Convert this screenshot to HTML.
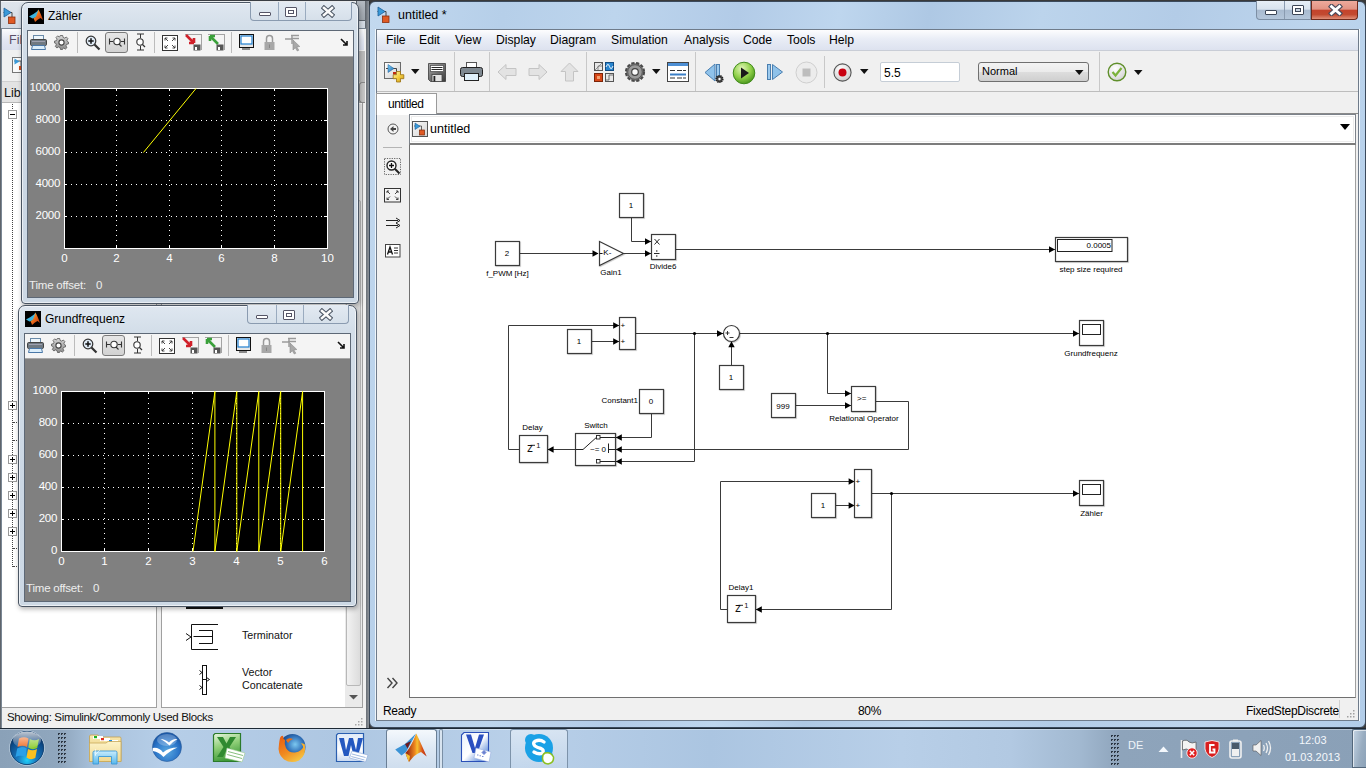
<!DOCTYPE html>
<html><head><meta charset="utf-8">
<style>
*{box-sizing:border-box}
body{margin:0;width:1366px;height:768px;overflow:hidden;position:relative;background:#3a3a3a;font-family:"Liberation Sans",sans-serif;font-size:12px;color:#000}
.a{position:absolute}
.t{position:absolute;white-space:nowrap;line-height:1}
</style></head><body>

<!-- ============ LIBRARY BROWSER (background) ============ -->
<div class="a" style="left:0;top:0;width:370px;height:2px;background:#3c4046"></div>
<div class="a" style="left:0;top:1px;width:370px;height:727px;background:linear-gradient(180deg,#dfe5ec 0,#d2dae3 28px,#cfd7e0 100%);border-top:1px solid #f4f6f8"></div>
<div class="a" style="left:0;top:1px;width:1px;height:727px;background:#5f656c"></div>
<div class="a" style="left:365px;top:1px;width:4px;height:727px;background:linear-gradient(90deg,#5c6269,#8d939a)"></div>
<div class="a" style="left:369px;top:1px;width:1px;height:727px;background:#2e3236"></div>
<svg class="a" style="left:1px;top:6px" width="20" height="20" viewBox="0 0 20 20">
 <path d="M2.5 6.5 H11 V13" fill="none" stroke="#444" stroke-width="1"/>
 <path d="M3 2 L3 11 L10 6.5 Z" fill="#3a9ad9" stroke="#1d5f9a" stroke-width="0.8"/>
 <rect x="7.5" y="11" width="6.5" height="6.5" fill="#e05a24" stroke="#8a2e0e" stroke-width="0.8"/>
</svg>
<div class="a" style="left:1px;top:28px;width:365px;height:700px;background:#f0f0f0;border:1px solid #7a8794;border-right:none;border-bottom:none"></div>
<div class="a" style="left:2px;top:29px;width:362px;height:21px;background:linear-gradient(#fbfcfd,#e4e8f3 50%,#dbe0ee)"></div>
<div class="t" style="left:9px;top:34px;font-size:12.5px;color:#5c5068">File</div>
<div class="a" style="left:2px;top:50px;width:362px;height:32px;background:#f0f0f0;border-bottom:1px solid #d0d0d0"></div>
<svg class="a" style="left:12px;top:57px" width="18" height="17" viewBox="0 0 18 17"><rect x="0.5" y="0.5" width="15" height="15" fill="#fbfbfb" stroke="#777"/><path d="M2 4 H9 V10" stroke="#444" fill="none" stroke-width="0.9"/><path d="M2.5 1.5 V7.5 L7.5 4.5Z" fill="#3a9ad9"/><rect x="7" y="9" width="4" height="4" fill="#d04a1a"/></svg>
<div class="a" style="left:2px;top:82px;width:362px;height:21px;background:#e3e3e3;border-bottom:1px solid #b8b8b8"></div>
<div class="t" style="left:4px;top:87px;font-size:12.5px;color:#111">Library</div>
<div class="a" style="left:356px;top:1px;width:9px;height:20px;background:linear-gradient(#b4bac1,#9ea5ad);border:1px solid #5d646c;border-right:none;border-top:none;border-radius:0 0 0 4px"></div>
<div class="a" style="left:359px;top:51px;width:6px;height:31px;background:#bcbcbc"></div>
<div class="a" style="left:359px;top:82px;width:6px;height:21px;background:#c6c6c6;border:1px solid #8a8a8a;border-right:none;border-radius:3px 0 0 3px"></div>
<!-- tree panel -->
<div class="a" style="left:2px;top:103px;width:155px;height:605px;background:#fff;border-right:1px solid #a0a0a0;border-bottom:1px solid #a0a0a0"></div>
<div class="a" style="left:12px;top:104px;width:1px;height:463px;border-left:1px dotted #444"></div>
<div class="a" style="left:8px;top:110px;width:9px;height:9px;border:1px solid #999;background:#fff"><div class="a" style="left:1px;top:3px;width:5px;height:1px;background:#000"></div></div>
<div class="a" style="left:8px;top:401px;width:9px;height:9px;border:1px solid #999;background:#fff"><div class="a" style="left:1px;top:3px;width:5px;height:1px;background:#000"></div><div class="a" style="left:3px;top:1px;width:1px;height:5px;background:#000"></div></div>
<div class="a" style="left:8px;top:455px;width:9px;height:9px;border:1px solid #999;background:#fff"><div class="a" style="left:1px;top:3px;width:5px;height:1px;background:#000"></div><div class="a" style="left:3px;top:1px;width:1px;height:5px;background:#000"></div></div>
<div class="a" style="left:8px;top:473px;width:9px;height:9px;border:1px solid #999;background:#fff"><div class="a" style="left:1px;top:3px;width:5px;height:1px;background:#000"></div><div class="a" style="left:3px;top:1px;width:1px;height:5px;background:#000"></div></div>
<div class="a" style="left:8px;top:491px;width:9px;height:9px;border:1px solid #999;background:#fff"><div class="a" style="left:1px;top:3px;width:5px;height:1px;background:#000"></div><div class="a" style="left:3px;top:1px;width:1px;height:5px;background:#000"></div></div>
<div class="a" style="left:8px;top:509px;width:9px;height:9px;border:1px solid #999;background:#fff"><div class="a" style="left:1px;top:3px;width:5px;height:1px;background:#000"></div><div class="a" style="left:3px;top:1px;width:1px;height:5px;background:#000"></div></div>
<div class="a" style="left:8px;top:527px;width:9px;height:9px;border:1px solid #999;background:#fff"><div class="a" style="left:1px;top:3px;width:5px;height:1px;background:#000"></div><div class="a" style="left:3px;top:1px;width:1px;height:5px;background:#000"></div></div>
<div class="a" style="left:13px;top:422px;width:6px;height:1px;border-top:1px dotted #444"></div>
<div class="a" style="left:13px;top:440px;width:6px;height:1px;border-top:1px dotted #444"></div>
<div class="a" style="left:13px;top:548px;width:6px;height:1px;border-top:1px dotted #444"></div>
<div class="a" style="left:13px;top:566px;width:6px;height:1px;border-top:1px dotted #444"></div>
<!-- right panel -->
<div class="a" style="left:161px;top:103px;width:202px;height:605px;background:#fff;border-left:1px solid #a0a0a0;border-right:1px solid #a0a0a0;border-bottom:1px solid #a0a0a0"></div>
<div class="a" style="left:345px;top:104px;width:17px;height:603px;background:#eaeaea"></div>
<div class="a" style="left:346px;top:200px;width:15px;height:486px;background:linear-gradient(90deg,#f2f2f2,#dcdcdc);border:1px solid #b8b8b8;border-radius:2px"></div>
<svg class="a" style="left:349px;top:695px" width="9" height="5"><path d="M0 0 H9 L4.5 4.5Z" fill="#555"/></svg>
<div class="a" style="left:186px;top:607px;width:37px;height:2px;background:#111"></div>
<svg class="a" style="left:180px;top:615px" width="50" height="85" viewBox="180 615 50 85" fill="none" stroke="#111" stroke-width="1">
 <path d="M186 633.5 L191 637 L186 640.5"/>
 <path d="M218 624.5 H191.5 V649.5 H218"/>
 <path d="M199 630.5 H212.5 V643.5 H199 M193.5 636.5 H212.5"/>
 <rect x="202.5" y="665.5" width="4" height="29"/>
 <path d="M202.5 679.5 H206.5"/>
 <path d="M199.5 670.5 L202 672.5 L199.5 674.5 M199.5 685.5 L202 687.5 L199.5 689.5 M206.5 677.5 L209.5 679.5 L206.5 681.5"/>
</svg>
<div class="t" style="left:242px;top:630px;font-size:10.7px;color:#111">Terminator</div>

<div class="t" style="left:242px;top:667px;font-size:10.7px;color:#111">Vector</div>
<div class="t" style="left:242px;top:680px;font-size:10.7px;color:#111">Concatenate</div>
<!-- status -->
<svg class="a" style="left:354px;top:717px" width="10" height="10"><rect x="7" y="1" width="1.5" height="1.5" fill="#a8a8a8"/><rect x="4" y="4" width="1.5" height="1.5" fill="#a8a8a8"/><rect x="7" y="4" width="1.5" height="1.5" fill="#a8a8a8"/><rect x="1" y="7" width="1.5" height="1.5" fill="#a8a8a8"/><rect x="4" y="7" width="1.5" height="1.5" fill="#a8a8a8"/><rect x="7" y="7" width="1.5" height="1.5" fill="#a8a8a8"/></svg>
<div class="t" style="left:7px;top:712px;font-size:11.5px;letter-spacing:-0.35px;color:#111">Showing: Simulink/Commonly Used Blocks</div>


<!-- ============ MAIN SIMULINK WINDOW ============ -->
<div id="main" class="a" style="left:369px;top:1px;width:997px;height:727px;border:1px solid #3b4a5c;border-radius:6px 6px 6px 6px;background:linear-gradient(100deg,#c3d9ef 0%,#b6cfe9 12%,#bdd5ed 22%,#b2cbe7 33%,#bed6ee 42%,#aec8e4 50%,#bcd4ec 60%,#b3cce7 72%,#bdd5ed 85%,#b2cde9 100%)">
</div>

<div class="a" style="left:376px;top:29px;width:983px;height:692px;background:#f0f0f0;border:1px solid #6f7b8a"></div>
<div class="a" style="left:1359px;top:29px;width:1px;height:692px;background:#f4f9fd"></div>
<div class="a" style="left:375px;top:29px;width:1px;height:692px;background:#eef5fb"></div>
<!-- title icon -->
<svg class="a" style="left:375px;top:5px" width="20" height="20" viewBox="0 0 20 20">
 <path d="M2.5 6.5 H11 V13" fill="none" stroke="#444" stroke-width="1"/>
 <path d="M3 2 L3 11 L10 6.5 Z" fill="#3a9ad9" stroke="#1d5f9a" stroke-width="0.8"/>
 <rect x="7.5" y="11" width="6.5" height="6.5" fill="#e05a24" stroke="#8a2e0e" stroke-width="0.8"/>
</svg>
<div class="t" style="left:398px;top:9px;font-size:12.5px;color:#000">untitled *</div>
<!-- caption buttons -->
<div class="a" style="left:1256px;top:1px;width:55px;height:19px;border:1px solid #7d8fa4;border-top:none;border-radius:0 0 0 4px;background:linear-gradient(#e6eef6,#d8e3ee 45%,#a9bbd0 52%,#b4c6da 100%)"></div>
<div class="a" style="left:1284px;top:1px;width:1px;height:18px;background:#8a9bb0"></div>
<div class="a" style="left:1265px;top:10px;width:12px;height:5px;border:1px solid #3c4656;background:#fff;border-radius:1px"></div>
<div class="a" style="left:1292px;top:5px;width:12px;height:10px;border:1px solid #3c4656;background:#fff;border-radius:1px"><div class="a" style="left:2px;top:2px;width:6px;height:4px;border:1px solid #3c4656;background:#c8d4e0"></div></div>
<div class="a" style="left:1311px;top:1px;width:47px;height:19px;border:1px solid #6e2a1c;border-top:none;border-radius:0 0 4px 0;background:linear-gradient(#eeaa9c,#e29484 45%,#c4432c 52%,#c24a30 75%,#e0907a)"></div>
<svg class="a" style="left:1328px;top:4px" width="15" height="12" viewBox="0 0 15 12"><path d="M3.5 2.5 L11.5 9.5 M11.5 2.5 L3.5 9.5" stroke="#4a4a5a" stroke-width="5" stroke-linecap="square"/><path d="M3.5 2.5 L11.5 9.5 M11.5 2.5 L3.5 9.5" stroke="#fff" stroke-width="2.8" stroke-linecap="square"/></svg>
<!-- menu bar -->
<div class="a" style="left:377px;top:30px;width:981px;height:21px;background:linear-gradient(#fdfdfe,#e9edf6 45%,#dde2ef);border-bottom:1px solid #c9cdd6"></div>
<div class="t" style="left:386px;top:34px;font-size:12.2px">File</div>
<div class="t" style="left:419px;top:34px;font-size:12.2px">Edit</div>
<div class="t" style="left:455px;top:34px;font-size:12.2px">View</div>
<div class="t" style="left:496px;top:34px;font-size:12.2px">Display</div>
<div class="t" style="left:550px;top:34px;font-size:12.2px">Diagram</div>
<div class="t" style="left:611px;top:34px;font-size:12.2px">Simulation</div>
<div class="t" style="left:684px;top:34px;font-size:12.2px">Analysis</div>
<div class="t" style="left:743px;top:34px;font-size:12.2px">Code</div>
<div class="t" style="left:787px;top:34px;font-size:12.2px">Tools</div>
<div class="t" style="left:829px;top:34px;font-size:12.2px">Help</div>
<!-- toolbar -->
<div class="a" style="left:377px;top:51px;width:981px;height:41px;background:#f0f0f0;border-bottom:1px solid #bdbdbd"></div>
<div class="a" style="left:454px;top:52px;width:1px;height:39px;background:#c8c8c8"></div>
<div class="a" style="left:489px;top:52px;width:1px;height:39px;background:#c8c8c8"></div>
<div class="a" style="left:586px;top:52px;width:1px;height:39px;background:#c8c8c8"></div>
<div class="a" style="left:695px;top:52px;width:1px;height:39px;background:#c8c8c8"></div>
<div class="a" style="left:824px;top:56px;width:1px;height:32px;background:#c8c8c8"></div>
<div class="a" style="left:1099px;top:52px;width:1px;height:39px;background:#c8c8c8"></div>

<!-- main toolbar icons -->
<svg class="a" style="left:380px;top:58px" width="28" height="28" viewBox="380 58 28 28">
 <defs><linearGradient id="nmg" x1="0" y1="0" x2="1" y2="1"><stop offset="0" stop-color="#ffffff"/><stop offset="1" stop-color="#cfcfcf"/></linearGradient><linearGradient id="plg" x1="0" y1="0" x2="1" y2="1"><stop offset="0" stop-color="#fff6b0"/><stop offset="0.5" stop-color="#f5d040"/><stop offset="1" stop-color="#c8961a"/></linearGradient><linearGradient id="trg" x1="0" y1="0" x2="1" y2="1"><stop offset="0" stop-color="#7fd0f5"/><stop offset="1" stop-color="#1a6ab0"/></linearGradient></defs>
 <rect x="384.5" y="62.5" width="16" height="16" fill="url(#nmg)" stroke="#6a6a6a"/>
 <path d="M386 68.5 H396.5 V72" fill="none" stroke="#333" stroke-width="0.9"/>
 <path d="M388 64.5 V72.5 L394 68.5Z" fill="url(#trg)" stroke="#1a5a98" stroke-width="0.5"/>
 <rect x="393" y="72" width="3" height="2.5" fill="#c02a10"/>
 <path d="M396.5 71.5 h4 v3.2 h3.3 v4 h-3.3 v3.3 h-4 v-3.3 h-3.3 v-4 h3.3z" fill="url(#plg)" stroke="#9a7010" stroke-width="0.8"/>
</svg>
<svg class="a" style="left:411px;top:69px" width="9" height="6"><path d="M0 0 H8.5 L4.25 5Z" fill="#111"/></svg>
<svg class="a" style="left:426px;top:62px" width="22" height="22" viewBox="426 62 22 22">
 <defs><linearGradient id="svg1" x1="0" y1="0" x2="1" y2="1"><stop offset="0" stop-color="#a8a8a8"/><stop offset="1" stop-color="#3a3a3a"/></linearGradient></defs>
 <path d="M428.5 63.5 H445.5 V81.5 H430.5 L428.5 79.5Z" fill="url(#svg1)" stroke="#3a3a3a" stroke-width="0.8"/>
 <rect x="430.5" y="65.5" width="13" height="6" fill="#fff" stroke="#555" stroke-width="0.8"/>
 <path d="M431.5 67.5 H442.5 M431.5 69.5 H442.5" stroke="#111" stroke-width="0.9"/>
 <rect x="432" y="74.5" width="10" height="7" fill="#e4e4e4" stroke="#444" stroke-width="0.8"/>
 <rect x="433.5" y="76" width="1.8" height="5.5" fill="#222"/>
</svg>
<svg class="a" style="left:460px;top:62px" width="23" height="20" viewBox="0 0 23 20">
 <rect x="6.5" y="0.5" width="10" height="6" fill="#fff" stroke="#555"/><rect x="0.5" y="5.5" width="22" height="9" rx="2" fill="#7e8890" stroke="#222"/><rect x="4.5" y="11.5" width="14" height="7" fill="#e0f0fa" stroke="#222"/>
</svg>
<svg class="a" style="left:497px;top:63px" width="20" height="18" viewBox="0 0 20 18"><path d="M1 9 L9 1.5 V5.5 H19 V12.5 H9 V16.5Z" fill="#e3e3e3" stroke="#c4c4c4"/></svg>
<svg class="a" style="left:528px;top:63px" width="20" height="18" viewBox="0 0 20 18"><path d="M19 9 L11 1.5 V5.5 H1 V12.5 H11 V16.5Z" fill="#e3e3e3" stroke="#c4c4c4"/></svg>
<svg class="a" style="left:560px;top:62px" width="19" height="20" viewBox="0 0 19 20"><path d="M9.5 1 L18 9.5 H13.5 V19 H5.5 V9.5 H1Z" fill="#e3e3e3" stroke="#c4c4c4"/></svg>
<svg class="a" style="left:593px;top:61px" width="22" height="22" viewBox="0 0 22 22">
 <rect x="1.5" y="1.5" width="8" height="8" fill="#e8e8e8" stroke="#555"/><path d="M2 9 L9 2 M5 9 V5 H9" stroke="#777" fill="none" stroke-width="0.8"/>
 <rect x="12.5" y="1.5" width="8" height="8" fill="#2a86cf" stroke="#134b80"/><path d="M13 6 Q15 1 16.5 5.5 T20 5" stroke="#fff" fill="none" stroke-width="0.9"/>
 <rect x="1.5" y="12.5" width="8" height="8" fill="#d84818" stroke="#7b2408"/><rect x="4" y="15" width="3" height="3" fill="#f5a070"/>
 <rect x="12.5" y="12.5" width="8" height="8" fill="#e8e8e8" stroke="#555"/><path d="M13 19 H16 V14 H20" stroke="#555" fill="none" stroke-width="0.8"/>
</svg>
<svg class="a" style="left:624px;top:61px" width="22" height="22" viewBox="0 0 22 22">
 <circle cx="11" cy="11" r="9" fill="#8a8a8a" stroke="#4a4a4a" stroke-width="2.2" stroke-dasharray="3.2 1.6"/><circle cx="11" cy="11" r="7.3" fill="#9a9a9a" stroke="#555"/><circle cx="11" cy="11" r="3.3" fill="#fafafa" stroke="#444" stroke-width="1.2"/>
</svg>
<svg class="a" style="left:652px;top:69px" width="9" height="6"><path d="M0 0 H8.5 L4.25 5Z" fill="#111"/></svg>
<svg class="a" style="left:667px;top:62px" width="22" height="20" viewBox="0 0 22 20">
 <rect x="0.5" y="0.5" width="21" height="19" fill="#fff" stroke="#444"/><rect x="1" y="1" width="20" height="3" fill="#4d8fd4"/><path d="M3 8.5 H8 M10 8.5 H15 M16 8.5 H19 M3 12.5 H19 M3 16 H8 M10 16 H15 M16 16 H19" stroke="#333" stroke-width="1.1"/><rect x="3" y="11.5" width="16" height="2" fill="#3b7fc6"/>
</svg>
<svg class="a" style="left:704px;top:62px" width="21" height="22" viewBox="0 0 21 22">
 <path d="M1 10.5 L11 2 V19Z" fill="#8fc2ea" stroke="#4a7fb0"/><rect x="12.5" y="2.5" width="3" height="14" fill="#9ccaee" stroke="#4a7fb0"/><circle cx="15.5" cy="17" r="3.3" fill="#444" stroke="#222" stroke-width="1.6" stroke-dasharray="1.2 0.8"/><circle cx="15.5" cy="17" r="1.2" fill="#fff"/>
</svg>
<svg class="a" style="left:732px;top:61px" width="24" height="24" viewBox="0 0 24 24">
 <defs><radialGradient id="gp" cx="40%" cy="30%" r="70%"><stop offset="0" stop-color="#e2f6b8"/><stop offset="0.6" stop-color="#8fd048"/><stop offset="1" stop-color="#4f9a20"/></radialGradient></defs>
 <circle cx="12" cy="12" r="10.8" fill="url(#gp)" stroke="#3f8a1a" stroke-width="1"/><path d="M9 6.5 L17 12 L9 17.5Z" fill="#1a1a1a"/>
</svg>
<svg class="a" style="left:766px;top:62px" width="18" height="20" viewBox="0 0 18 20">
 <rect x="1.5" y="2.5" width="3" height="15" fill="#9ccaee" stroke="#4a7fb0"/><path d="M6.5 2.5 L16.5 10 L6.5 17.5Z" fill="#8fc2ea" stroke="#4a7fb0"/>
</svg>
<svg class="a" style="left:795px;top:61px" width="23" height="23" viewBox="0 0 23 23">
 <circle cx="11.5" cy="11.5" r="10.5" fill="#ececec" stroke="#cfcfcf"/><rect x="7.5" y="7.5" width="8" height="8" fill="#bdbdbd"/>
</svg>
<svg class="a" style="left:833px;top:63px" width="19" height="19" viewBox="0 0 19 19">
 <defs><radialGradient id="gr" cx="40%" cy="30%" r="70%"><stop offset="0" stop-color="#fff"/><stop offset="1" stop-color="#cfcfcf"/></radialGradient></defs>
 <circle cx="9.5" cy="9.5" r="8.6" fill="url(#gr)" stroke="#555" stroke-width="1.1"/><circle cx="9.5" cy="9.5" r="4" fill="#c80010"/>
</svg>
<svg class="a" style="left:860px;top:69px" width="9" height="6"><path d="M0 0 H8.5 L4.25 5Z" fill="#111"/></svg>
<div class="a" style="left:880px;top:62px;width:80px;height:20px;background:#fff;border:1px solid #c5cdd6;border-radius:2px"></div>
<div class="t" style="left:884px;top:67px;font-size:12px">5.5</div>
<div class="a" style="left:978px;top:62px;width:111px;height:20px;border:1px solid #707070;border-radius:3px;background:linear-gradient(#f3f3f3,#ebebeb 50%,#dddddd 51%,#cfcfcf)"></div>
<div class="t" style="left:982px;top:66px;font-size:11px">Normal</div>
<svg class="a" style="left:1075px;top:70px" width="9" height="6"><path d="M0 0 H8.5 L4.25 5Z" fill="#111"/></svg>
<svg class="a" style="left:1107px;top:62px" width="20" height="20" viewBox="0 0 20 20">
 <defs><radialGradient id="gc" cx="40%" cy="30%" r="70%"><stop offset="0" stop-color="#fff"/><stop offset="1" stop-color="#d5d5d5"/></radialGradient></defs>
 <circle cx="10" cy="10" r="8.8" fill="url(#gc)" stroke="#5f8f2a" stroke-width="1.4"/><path d="M5.5 10 L8.5 13.5 L14.5 6" stroke="#7bb23a" stroke-width="2.2" fill="none"/>
</svg>
<svg class="a" style="left:1134px;top:70px" width="9" height="6"><path d="M0 0 H8.5 L4.25 5Z" fill="#111"/></svg>
<!-- palette -->
<svg class="a" style="left:387px;top:123px" width="12" height="12" viewBox="0 0 12 12"><circle cx="6" cy="6" r="5" fill="#f4f4f4" stroke="#555"/><path d="M3 6 L6.5 3 V9Z M5 5 H9 V7 H5Z" fill="#444"/></svg>
<div class="a" style="left:383px;top:147px;width:19px;height:1px;background:#b4b4b4"></div>
<svg class="a" style="left:384px;top:158px" width="18" height="18" viewBox="0 0 18 18"><rect x="0.5" y="0.5" width="16" height="16" fill="none" stroke="#666" stroke-dasharray="1.2 1.2"/><circle cx="7.5" cy="7.5" r="4.5" fill="#fff" stroke="#222" stroke-width="1.4"/><path d="M7.5 5 V10 M5 7.5 H10" stroke="#111" stroke-width="1.3"/><path d="M10.8 10.8 L15.5 15.5" stroke="#222" stroke-width="2"/></svg>
<svg class="a" style="left:384px;top:188px" width="17" height="15" viewBox="0 0 17 15"><rect x="0.5" y="0.5" width="16" height="13.5" fill="#f4f4f4" stroke="#333"/><path d="M3 3 L6 6 M3 3 V5 M3 3 H5 M14 3 L11 6 M14 3 V5 M14 3 H12 M3 11.5 L6 8.5 M3 11.5 V9.5 M3 11.5 H5 M14 11.5 L11 8.5 M14 11.5 V9.5 M14 11.5 H12" stroke="#333" stroke-width="0.9"/></svg>
<svg class="a" style="left:385px;top:217px" width="17" height="12" viewBox="0 0 17 12"><path d="M1 3.5 H13 M1 8.5 H13 M11 1 L15 3.5 L11 6 M11 6 L15 8.5 L11 11" stroke="#222" fill="none" stroke-width="1"/></svg>
<svg class="a" style="left:385px;top:244px" width="16" height="14" viewBox="0 0 16 14"><rect x="0.5" y="0.5" width="14.5" height="12.5" fill="#fff" stroke="#444"/><path d="M2.5 10.5 L5 3 L7.5 10.5 M3.5 8 H6.5" stroke="#111" stroke-width="1.3" fill="none"/><path d="M9 4 H13 M9 6.5 H13 M9 9 H13" stroke="#333"/></svg>
<svg class="a" style="left:386px;top:677px" width="13" height="12" viewBox="0 0 13 12"><path d="M1.5 1 L6 6 L1.5 11 M6.5 1 L11 6 L6.5 11" stroke="#444" stroke-width="1.4" fill="none"/></svg>

<!-- tab bar -->
<div class="a" style="left:377px;top:92px;width:981px;height:23px;background:#f0f0f0"></div>
<div class="a" style="left:376px;top:93px;width:61px;height:22px;background:#fff;border:1px solid #9a9a9a;border-bottom:none"></div>
<div class="t" style="left:388px;top:98px;font-size:12px;letter-spacing:-0.4px">untitled</div>
<div class="a" style="left:437px;top:113px;width:921px;height:1px;background:#8a8a8a"></div>
<!-- address bar -->
<div class="a" style="left:409px;top:114px;width:947px;height:31px;background:#fff;border:1px solid #7d838b;border-bottom:2px solid #7c7c7c"></div>
<div class="a" style="left:411px;top:116px;width:943px;height:26px;border:1px solid #ececec"></div>
<svg class="a" style="left:412px;top:121px" width="16" height="16" viewBox="0 0 16 16"><defs><linearGradient id="abg" x1="0" y1="0" x2="1" y2="1"><stop offset="0" stop-color="#fafafa"/><stop offset="1" stop-color="#d4d4d4"/></linearGradient></defs><rect x="0.5" y="0.5" width="15" height="15" fill="url(#abg)" stroke="#555"/><path d="M2 5 H9.5 V10" fill="none" stroke="#444" stroke-width="0.8"/><path d="M3 2 L3 8.5 L8 5.25 Z" fill="#3a9ad9" stroke="#1d5f9a" stroke-width="0.6"/><rect x="7.5" y="9" width="5" height="5" fill="#e05a24" stroke="#7a2a0a" stroke-width="0.7"/></svg>
<div class="t" style="left:430px;top:123px;font-size:12.5px">untitled</div>
<svg class="a" style="left:1340px;top:124px" width="11" height="7"><path d="M0 0 H10 L5 6 Z" fill="#000"/></svg>
<!-- canvas -->
<div class="a" style="left:409px;top:145px;width:947px;height:553px;background:#fff;border-left:1px solid #707070;border-bottom:1px solid #707070;border-right:1px solid #a0a0a0"></div>

<svg class="a" style="left:410px;top:146px" width="944" height="551" viewBox="410 146 944 551" font-family="Liberation Sans, sans-serif">
<defs>
 <filter id="sh" x="-10%" y="-10%" width="130%" height="130%"><feDropShadow dx="0.8" dy="0.8" stdDeviation="0.5" flood-color="#000" flood-opacity="0.22"/></filter>
</defs>
<g stroke="#3a3a3a" stroke-width="1" fill="none">
 <!-- top row -->
 <path d="M520 253.5 H598"/>
 <path d="M623 253.5 H651"/>
 <path d="M631.5 217.5 V241.5 H651"/>
 <path d="M676 249.5 H1055"/>
 <!-- middle -->
 <path d="M591 341.5 H619"/>
 <path d="M619 325.5 H508.5 V449.5 H519"/>
 <path d="M635.5 333.5 H723"/>
 <path d="M739 333.5 H1079"/>
 <path d="M694.5 333.5 V461.5 H615.8"/>
 <path d="M731.5 365 V341"/>
 <path d="M827.5 333.5 V393.5 H851"/>
 <path d="M795.5 405.5 H851"/>
 <path d="M876 401.5 H908.5 V449.5 H615.8"/>
 <path d="M651.5 413 V437.5 H615.8"/>
 <path d="M575 449.5 H547.5"/>
 <!-- bottom -->
 <path d="M835.5 505.5 H854.6"/>
 <path d="M854.6 481.5 H720.5 V609.5 H727"/>
 <path d="M872 493.5 H1079"/>
 <path d="M891.5 493.5 V609.5 H755.8"/>
</g>
<g fill="#000" stroke="none">
 <!-- arrowheads -->
 <path d="M598.5 253.5 l-6 -3.2 v6.4z"/>
 <path d="M651 253.5 l-6 -3.2 v6.4z"/>
 <path d="M651 241.5 l-6 -3.2 v6.4z"/>
 <path d="M1055 249.5 l-6 -3.2 v6.4z"/>
 <path d="M619.2 325.5 l-6 -3.2 v6.4z"/>
 <path d="M619.2 341.5 l-6 -3.2 v6.4z"/>
 <path d="M723 333.5 l-6 -3.2 v6.4z"/>
 <path d="M731.5 341.2 l-3.2 6 h6.4z"/>
 <path d="M851 393.5 l-6 -3.2 v6.4z"/>
 <path d="M851 405.5 l-6 -3.2 v6.4z"/>
 <path d="M1079 333.5 l-6 -3.2 v6.4z"/>
 <path d="M615.8 437.5 l6 -3.2 v6.4z"/>
 <path d="M615.8 449.5 l6 -3.2 v6.4z"/>
 <path d="M615.8 461.5 l6 -3.2 v6.4z"/>
 <path d="M547.6 449.5 l6 -3.2 v6.4z"/>
 <path d="M854.6 481.5 l-6 -3.2 v6.4z"/>
 <path d="M854.6 505.5 l-6 -3.2 v6.4z"/>
 <path d="M1079 493.5 l-6 -3.2 v6.4z"/>
 <path d="M755.8 609.5 l6 -3.2 v6.4z"/>
 <!-- junction dots -->
 <circle cx="694.5" cy="333.5" r="1.6"/>
 <circle cx="827.5" cy="333.5" r="1.6"/>
 <circle cx="891.5" cy="493.5" r="1.6"/>
</g>
<g fill="#fff" stroke="#3a3a3a" stroke-width="1.2" filter="url(#sh)">
 <rect x="495.5" y="241.5" width="24" height="24"/>
 <path d="M599.5 241.5 L623.5 253.5 L599.5 265.5 Z"/>
 <rect x="651.5" y="234.5" width="24" height="25"/>
 <rect x="619.5" y="193.5" width="24" height="24"/>
 <rect x="1055.5" y="237.5" width="72" height="24"/>
 <rect x="619.5" y="317.5" width="16" height="32"/>
 <rect x="567.5" y="329.5" width="24" height="24"/>
 <circle cx="731.5" cy="333.5" r="8"/>
 <rect x="719.5" y="365.5" width="24" height="24"/>
 <rect x="851.5" y="386.5" width="24" height="25"/>
 <rect x="771.5" y="393.5" width="24" height="24"/>
 <rect x="639.5" y="389.5" width="24" height="24"/>
 <rect x="519.5" y="435.5" width="28" height="27"/>
 <rect x="575.5" y="433.5" width="40" height="32"/>
 <rect x="1079.5" y="320.5" width="24" height="25"/>
 <rect x="854.5" y="469.5" width="17" height="48"/>
 <rect x="811.5" y="493.5" width="24" height="24"/>
 <rect x="727.5" y="595.5" width="28" height="27"/>
 <rect x="1079.5" y="480.5" width="24" height="25"/>
</g>
<g fill="none" stroke="#222" stroke-width="1">
 <rect x="1057.5" y="239.5" width="54.5" height="12"/>
 <rect x="1082.5" y="324.5" width="18" height="10"/>
 <rect x="1082.5" y="484.5" width="18" height="10"/>
 <!-- switch internals -->
 <path d="M575.5 449.5 H583 L596.3 437.5"/>
 <rect x="596.5" y="435.5" width="3.5" height="3.5" stroke-width="0.9"/>
 <rect x="596.5" y="459.5" width="3.5" height="3.5" stroke-width="0.9"/>
 <path d="M600 437.5 H615.5 M600 461.5 H615.5 M608.5 443.5 V453 M608.5 449.5 H615.5"/>
 <!-- gain -K- -->
 <path d="M599 253.5 H602"/>
 <path d="M729.5 337.5 H733.5 M725.5 333 H729.5 M727.5 331 V335" stroke-width="0.9"/>
</g>
<g font-size="8" fill="#000" text-anchor="middle">
 <text x="507" y="255.5">2</text>
 <text x="631" y="207.5">1</text>
 <text x="579" y="344">1</text>
 <text x="731" y="380">1</text>
 <text x="823" y="508">1</text>
 <text x="783" y="408.5">999</text>
 <text x="651" y="404">0</text>
 <text x="507.5" y="275.5">f_PWM [Hz]</text>
 <text x="611" y="275">Gain1</text>
 <text x="663" y="268.5">Divide6</text>
 <text x="1091" y="271.5">step size required</text>
 <text x="864" y="421">Relational Operator</text>
 <text x="532.5" y="430">Delay</text>
 <text x="596" y="428">Switch</text>
 <text x="1091" y="356">Grundfrequenz</text>
 <text x="1091.5" y="516">Zähler</text>
 <text x="741" y="590">Delay1</text>
 <text x="606" y="255.3">-K-</text>
</g>
<g font-size="8" fill="#000">
 <text x="601.5" y="402.8">Constant1</text>
 <text x="1111" y="247.8" text-anchor="end">0.0005</text>
 <text x="590" y="452">~= 0</text>
 <text x="620.5" y="328">+</text>
 <text x="620.5" y="344">+</text>
 <text x="855.5" y="484">+</text>
 <text x="855.5" y="508">+</text>
 <text x="857" y="401">&gt;=</text>
</g>
<g font-size="11" fill="#111">
 <text x="527" y="452" font-size="12">z</text><text x="536.3" y="447.8" font-size="7.5">1</text>
 <text x="735" y="612" font-size="12">z</text><text x="744.3" y="607.8" font-size="7.5">1</text>
 <path d="M530.5 445.3 H535 M738.5 605.3 H743" stroke="#111" stroke-width="0.9"/>
 <path d="M654.5 239 L659.5 244.5 M659.5 239 L654.5 244.5 M654 253.5 H659.5" stroke="#111" stroke-width="0.9" fill="none"/>
 <circle cx="656.8" cy="251" r="0.7"/><circle cx="656.8" cy="256" r="0.7"/>
</g>
</svg>

<!-- status bar -->
<div class="t" style="left:383px;top:705px;font-size:12px;letter-spacing:-0.3px">Ready</div>
<div class="t" style="left:858px;top:705px;font-size:12px;letter-spacing:-0.3px">80%</div>
<div class="t" style="left:1246px;top:705px;font-size:12px;letter-spacing:-0.3px">FixedStepDiscrete</div>
<div class="a" style="left:1339px;top:700px;width:1px;height:18px;background:#d0d0d0"></div><svg class="a" style="left:1346px;top:709px" width="10" height="10"><rect x="7" y="1" width="1.5" height="1.5" fill="#a0a0a0"/><rect x="4" y="4" width="1.5" height="1.5" fill="#a0a0a0"/><rect x="7" y="4" width="1.5" height="1.5" fill="#a0a0a0"/><rect x="1" y="7" width="1.5" height="1.5" fill="#a0a0a0"/><rect x="4" y="7" width="1.5" height="1.5" fill="#a0a0a0"/><rect x="7" y="7" width="1.5" height="1.5" fill="#a0a0a0"/></svg>


<!-- ============ SCOPE: Zaehler ============ -->
<div class="a" style="left:21px;top:2px;width:338px;height:302px;border:1px solid #4a5563;border-radius:7px 7px 4px 4px;background:linear-gradient(180deg,#dfe7f0 0px,#d3dee9 25px,#cbd7e4 60%,#cdd9e5 100%);box-shadow:inset 0 0 0 1px rgba(255,255,255,0.6),1px 2px 5px rgba(0,0,0,0.3)"></div><svg class="a" style="left:28px;top:8px" width="16" height="16" viewBox="0 0 16 16">
<defs><linearGradient id="mo288" x1="0" y1="0" x2="1" y2="1"><stop offset="0" stop-color="#ffd23a"/><stop offset="0.5" stop-color="#e8661a"/><stop offset="1" stop-color="#b8300c"/></linearGradient></defs>
<rect width="16" height="16" fill="#000"/>
<path d="M1 8.5 L5.5 6 L9 3.5 L10.5 1.5 L10.5 6 L7.5 9.5 L4.5 10.5 Z" fill="#3db4de"/>
<path d="M10.5 1.5 Q12.5 5 15 12 L12.5 10 Q9.5 11.5 7 14 Q6.5 11.5 5.5 10.5 L8 8.5 Q9.5 5 10.5 1.5 Z" fill="url(#mo288)"/>
</svg><div class="t" style="left:48px;top:10px;font-size:12px;color:#000">Zähler</div><div class="a" style="left:250px;top:2px;width:102px;height:19px;border:1px solid #8a9bb0;border-top:none;border-radius:0 0 4px 4px;background:linear-gradient(#e3eaf2,#d6e0ea)"></div>
<div class="a" style="left:278px;top:2px;width:1px;height:18px;background:#9aabbf"></div>
<div class="a" style="left:305px;top:2px;width:1px;height:18px;background:#9aabbf"></div>
<div class="a" style="left:259px;top:12px;width:12px;height:4px;border:1px solid #556;background:#fff;border-radius:1px"></div>
<div class="a" style="left:285px;top:7px;width:12px;height:10px;border:1px solid #556;background:#fff;border-radius:1px"><div class="a" style="left:2px;top:2px;width:6px;height:4px;border:1px solid #556"></div></div>
<svg class="a" style="left:321px;top:5px" width="14" height="13" viewBox="0 0 14 13"><path d="M3 3 L11 10 M11 3 L3 10" stroke="#4b5563" stroke-width="4.6" stroke-linecap="square"/><path d="M3 3 L11 10 M11 3 L3 10" stroke="#fbfbfb" stroke-width="2.6" stroke-linecap="square"/></svg><div class="a" style="left:27px;top:30px;width:327px;height:268px;border:1px solid #5d6876;background:#808080"></div><div class="a" style="left:28px;top:31px;width:325px;height:26px;background:#f4f4f4;border-bottom:1px solid #a9a9a9"></div><svg class="a" style="left:30px;top:35px" width="17" height="15" viewBox="0 0 17 15"><rect x="3.5" y="0.5" width="10" height="5" fill="#eef6fb" stroke="#6a8aa8"/><rect x="0.5" y="4.5" width="16" height="6" rx="1.2" fill="#707a82" stroke="#444"/><path d="M2 6.5 H15" stroke="#aab" stroke-width="0.8"/><path d="M2.5 10.5 H14.5 L15.5 14.5 H1.5Z" fill="#dceefa" stroke="#4a78a8"/></svg><svg class="a" style="left:54px;top:35px" width="15" height="15" viewBox="0 0 15 15"><defs><linearGradient id="gg27" x1="0" y1="0" x2="0" y2="1"><stop offset="0" stop-color="#d8d8d8"/><stop offset="1" stop-color="#8a8a8a"/></linearGradient></defs><path d="M6.3 0.5 H8.7 L9.1 2.4 L10.7 3.1 L12.3 2 L13.9 3.6 L12.9 5.2 L13.5 6.8 L14.5 7.1 V8.9 L12.6 9.3 L11.9 10.9 L13 12.5 L11.4 14.1 L9.8 13.1 L8.7 13.6 L8.5 14.5 H6.5 L6.1 12.6 L4.5 11.9 L2.9 13 L1.3 11.4 L2.3 9.8 L1.7 8.2 L0.5 7.9 V6.1 L2.4 5.7 L3.1 4.1 L2 2.5 L3.6 0.9 L5.2 1.9 L6.1 1.4Z" fill="url(#gg27)" stroke="#555" stroke-width="0.8"/><circle cx="7.5" cy="7.5" r="2.6" fill="#fff" stroke="#444" stroke-width="1.1"/></svg><div class="a" style="left:77px;top:32px;width:1px;height:21px;background:#bcbcbc"></div><svg class="a" style="left:85px;top:35px" width="16" height="16" viewBox="0 0 16 16"><circle cx="6" cy="6" r="4.8" fill="#dfeaf5" stroke="#333" stroke-width="1.2"/><path d="M6 3.3 V8.7 M3.3 6 H8.7" stroke="#111" stroke-width="1.5"/><path d="M9.5 9.5 L14.5 14.5" stroke="#333" stroke-width="2.2"/></svg><div class="a" style="left:105px;top:32px;width:23px;height:21px;border:1px solid #7a7a7a;border-radius:3px;background:linear-gradient(#e6e6e6,#d2d2d2)"></div><svg class="a" style="left:108px;top:35px" width="18" height="15" viewBox="0 0 18 15"><circle cx="9" cy="6.5" r="3.2" fill="#fff" stroke="#333" stroke-width="1.1"/><path d="M1 6.5 H5 M13 6.5 H17 M1.5 3.5 V9.5 M16.5 3.5 V9.5 M11 9 L13.5 11.5" stroke="#333" stroke-width="1.1"/></svg><svg class="a" style="left:134px;top:33px" width="13" height="18" viewBox="0 0 13 18"><path d="M3 1 H10 M6.5 1 V5 M3 17 H10 M6.5 13 V17" stroke="#333"/><circle cx="6" cy="9" r="3.2" fill="#fff" stroke="#333" stroke-width="1.1"/><path d="M8.5 11.5 L11 14" stroke="#333" stroke-width="1.2"/></svg><div class="a" style="left:154px;top:32px;width:1px;height:21px;background:#bcbcbc"></div><svg class="a" style="left:162px;top:35px" width="16" height="16" viewBox="0 0 16 16"><rect x="0.5" y="0.5" width="15" height="15" fill="#fff" stroke="#333"/><path d="M3 3 L6 6 M3 3 V5.5 M3 3 H5.5 M13 3 L10 6 M13 3 V5.5 M13 3 H10.5 M3 13 L6 10 M3 13 V10.5 M3 13 H5.5 M13 13 L10 10 M13 13 V10.5 M13 13 H10.5" stroke="#333" stroke-width="0.9"/></svg><svg class="a" style="left:185px;top:34px" width="17" height="17" viewBox="0 0 17 17"><path d="M0.5 0.5 H16.5 V16.5" stroke="#555" stroke-dasharray="1 1" fill="none"/><path d="M1 1 L9 9 M9 9 V4 M9 9 H4" stroke="#d0202a" stroke-width="2.6"/><rect x="8.5" y="10.5" width="7" height="6" fill="#555"/><rect x="10" y="13" width="2" height="3" fill="#fff"/></svg><svg class="a" style="left:208px;top:34px" width="17" height="17" viewBox="0 0 17 17"><path d="M0.5 0.5 H16.5 V16.5" stroke="#555" stroke-dasharray="1 1" fill="none"/><path d="M10 10 L2 2 M2 2 V7 M2 2 H7" stroke="#3aa03a" stroke-width="2.6"/><rect x="8.5" y="10.5" width="7" height="6" fill="#555"/><rect x="10" y="13" width="2" height="3" fill="#fff"/></svg><div class="a" style="left:231px;top:32px;width:1px;height:21px;background:#bcbcbc"></div><svg class="a" style="left:239px;top:34px" width="15" height="17" viewBox="0 0 15 17"><rect x="0.5" y="0.5" width="14" height="13" fill="#e8e8e8" stroke="#111"/><rect x="2" y="2" width="11" height="8" fill="#fff" stroke="#1e7fd0" stroke-width="1.2"/><path d="M4 14 V16 M6 14 V16 M8 14 V16 M10 14 V16" stroke="#222"/></svg><svg class="a" style="left:263px;top:34px" width="13" height="17" viewBox="0 0 13 17"><path d="M3.5 8 V4.5 A3 3 0 0 1 9.5 4.5 V8" fill="none" stroke="#9a9a9a" stroke-width="1.5"/><rect x="1.5" y="8" width="10" height="8" fill="#a8a8a8"/><path d="M6.5 10.5 V14" stroke="#888"/></svg><svg class="a" style="left:285px;top:34px" width="17" height="18" viewBox="0 0 17 18"><path d="M0 5 H8 M6 1.5 H14 M6 4.5 H14 M7 1 V10" stroke="#9a9a9a" stroke-width="1.4"/><path d="M8 6 L8 16 L10.3 13.8 L12.3 17 L13.8 16.2 L11.8 13 L14.8 12.5 Z" fill="#a8a8a8" stroke="#8a8a8a" stroke-width="0.6"/></svg><svg class="a" style="left:340px;top:38px" width="9" height="9" viewBox="0 0 9 9"><path d="M1 1 L7 7 M7 3 V7 H3" stroke="#111" stroke-width="1.6" fill="none"/></svg><svg class="a" style="left:0;top:0" width="366" height="728" font-family="Liberation Sans, sans-serif"><rect x="64" y="88" width="264" height="161" fill="#000"/><path d="M116.5 90 V248" stroke="#fff" stroke-width="1" stroke-dasharray="1 4"/><path d="M116.5 248 v-3 M116.5 88 v3" stroke="#fff" stroke-width="1"/><path d="M169.5 90 V248" stroke="#fff" stroke-width="1" stroke-dasharray="1 4"/><path d="M169.5 248 v-3 M169.5 88 v3" stroke="#fff" stroke-width="1"/><path d="M221.5 90 V248" stroke="#fff" stroke-width="1" stroke-dasharray="1 4"/><path d="M221.5 248 v-3 M221.5 88 v3" stroke="#fff" stroke-width="1"/><path d="M274.5 90 V248" stroke="#fff" stroke-width="1" stroke-dasharray="1 4"/><path d="M274.5 248 v-3 M274.5 88 v3" stroke="#fff" stroke-width="1"/><path d="M66 216.5 H327" stroke="#fff" stroke-width="1" stroke-dasharray="1 4"/><path d="M64 216.5 h3 M327 216.5 h-3" stroke="#fff" stroke-width="1"/><path d="M66 184.5 H327" stroke="#fff" stroke-width="1" stroke-dasharray="1 4"/><path d="M64 184.5 h3 M327 184.5 h-3" stroke="#fff" stroke-width="1"/><path d="M66 152.5 H327" stroke="#fff" stroke-width="1" stroke-dasharray="1 4"/><path d="M64 152.5 h3 M327 152.5 h-3" stroke="#fff" stroke-width="1"/><path d="M66 120.5 H327" stroke="#fff" stroke-width="1" stroke-dasharray="1 4"/><path d="M64 120.5 h3 M327 120.5 h-3" stroke="#fff" stroke-width="1"/><rect x="64.5" y="88.5" width="263" height="160" fill="none" stroke="#fff" stroke-width="1"/><path d="M143.4 152.5 L196.0 88.5" stroke="#ffff00" stroke-width="1" fill="none"/><text x="64.5" y="262" fill="#fff" font-size="11.5" text-anchor="middle">0</text><text x="116.5" y="262" fill="#fff" font-size="11.5" text-anchor="middle">2</text><text x="169.5" y="262" fill="#fff" font-size="11.5" text-anchor="middle">4</text><text x="221.5" y="262" fill="#fff" font-size="11.5" text-anchor="middle">6</text><text x="274.5" y="262" fill="#fff" font-size="11.5" text-anchor="middle">8</text><text x="327.5" y="262" fill="#fff" font-size="11.5" text-anchor="middle">10</text><text x="60" y="219.3" fill="#fff" font-size="11.5" text-anchor="end" letter-spacing="-0.3">2000</text><text x="60" y="187.3" fill="#fff" font-size="11.5" text-anchor="end" letter-spacing="-0.3">4000</text><text x="60" y="155.3" fill="#fff" font-size="11.5" text-anchor="end" letter-spacing="-0.3">6000</text><text x="60" y="123.3" fill="#fff" font-size="11.5" text-anchor="end" letter-spacing="-0.3">8000</text><text x="60" y="91.3" fill="#fff" font-size="11.5" text-anchor="end" letter-spacing="-0.3">10000</text></svg><div class="t" style="left:29px;top:280px;font-size:11.5px;letter-spacing:-0.2px;color:#eee">Time offset:</div><div class="t" style="left:96px;top:280px;font-size:11.5px;color:#eee">0</div>
<!-- ============ SCOPE: Grundfrequenz ============ -->
<div class="a" style="left:18px;top:305px;width:339px;height:302px;border:1px solid #4a5563;border-radius:7px 7px 4px 4px;background:linear-gradient(180deg,#dfe7f0 0px,#d3dee9 25px,#cbd7e4 60%,#cdd9e5 100%);box-shadow:inset 0 0 0 1px rgba(255,255,255,0.6),1px 2px 5px rgba(0,0,0,0.3)"></div><svg class="a" style="left:25px;top:311px" width="16" height="16" viewBox="0 0 16 16">
<defs><linearGradient id="mo25311" x1="0" y1="0" x2="1" y2="1"><stop offset="0" stop-color="#ffd23a"/><stop offset="0.5" stop-color="#e8661a"/><stop offset="1" stop-color="#b8300c"/></linearGradient></defs>
<rect width="16" height="16" fill="#000"/>
<path d="M1 8.5 L5.5 6 L9 3.5 L10.5 1.5 L10.5 6 L7.5 9.5 L4.5 10.5 Z" fill="#3db4de"/>
<path d="M10.5 1.5 Q12.5 5 15 12 L12.5 10 Q9.5 11.5 7 14 Q6.5 11.5 5.5 10.5 L8 8.5 Q9.5 5 10.5 1.5 Z" fill="url(#mo25311)"/>
</svg><div class="t" style="left:45px;top:313px;font-size:12px;color:#000">Grundfrequenz</div><div class="a" style="left:247px;top:305px;width:102px;height:19px;border:1px solid #8a9bb0;border-top:none;border-radius:0 0 4px 4px;background:linear-gradient(#e3eaf2,#d6e0ea)"></div>
<div class="a" style="left:276px;top:305px;width:1px;height:18px;background:#9aabbf"></div>
<div class="a" style="left:303px;top:305px;width:1px;height:18px;background:#9aabbf"></div>
<div class="a" style="left:256px;top:315px;width:12px;height:4px;border:1px solid #556;background:#fff;border-radius:1px"></div>
<div class="a" style="left:283px;top:310px;width:12px;height:10px;border:1px solid #556;background:#fff;border-radius:1px"><div class="a" style="left:2px;top:2px;width:6px;height:4px;border:1px solid #556"></div></div>
<svg class="a" style="left:319px;top:308px" width="14" height="13" viewBox="0 0 14 13"><path d="M3 3 L11 10 M11 3 L3 10" stroke="#4b5563" stroke-width="4.6" stroke-linecap="square"/><path d="M3 3 L11 10 M11 3 L3 10" stroke="#fbfbfb" stroke-width="2.6" stroke-linecap="square"/></svg><div class="a" style="left:24px;top:333px;width:327px;height:269px;border:1px solid #5d6876;background:#808080"></div><div class="a" style="left:25px;top:334px;width:325px;height:25px;background:#f4f4f4;border-bottom:1px solid #a9a9a9"></div><svg class="a" style="left:27px;top:338px" width="17" height="15" viewBox="0 0 17 15"><rect x="3.5" y="0.5" width="10" height="5" fill="#eef6fb" stroke="#6a8aa8"/><rect x="0.5" y="4.5" width="16" height="6" rx="1.2" fill="#707a82" stroke="#444"/><path d="M2 6.5 H15" stroke="#aab" stroke-width="0.8"/><path d="M2.5 10.5 H14.5 L15.5 14.5 H1.5Z" fill="#dceefa" stroke="#4a78a8"/></svg><svg class="a" style="left:51px;top:338px" width="15" height="15" viewBox="0 0 15 15"><defs><linearGradient id="gg24" x1="0" y1="0" x2="0" y2="1"><stop offset="0" stop-color="#d8d8d8"/><stop offset="1" stop-color="#8a8a8a"/></linearGradient></defs><path d="M6.3 0.5 H8.7 L9.1 2.4 L10.7 3.1 L12.3 2 L13.9 3.6 L12.9 5.2 L13.5 6.8 L14.5 7.1 V8.9 L12.6 9.3 L11.9 10.9 L13 12.5 L11.4 14.1 L9.8 13.1 L8.7 13.6 L8.5 14.5 H6.5 L6.1 12.6 L4.5 11.9 L2.9 13 L1.3 11.4 L2.3 9.8 L1.7 8.2 L0.5 7.9 V6.1 L2.4 5.7 L3.1 4.1 L2 2.5 L3.6 0.9 L5.2 1.9 L6.1 1.4Z" fill="url(#gg24)" stroke="#555" stroke-width="0.8"/><circle cx="7.5" cy="7.5" r="2.6" fill="#fff" stroke="#444" stroke-width="1.1"/></svg><div class="a" style="left:74px;top:335px;width:1px;height:21px;background:#bcbcbc"></div><svg class="a" style="left:82px;top:338px" width="16" height="16" viewBox="0 0 16 16"><circle cx="6" cy="6" r="4.8" fill="#dfeaf5" stroke="#333" stroke-width="1.2"/><path d="M6 3.3 V8.7 M3.3 6 H8.7" stroke="#111" stroke-width="1.5"/><path d="M9.5 9.5 L14.5 14.5" stroke="#333" stroke-width="2.2"/></svg><div class="a" style="left:102px;top:335px;width:23px;height:21px;border:1px solid #7a7a7a;border-radius:3px;background:linear-gradient(#e6e6e6,#d2d2d2)"></div><svg class="a" style="left:105px;top:338px" width="18" height="15" viewBox="0 0 18 15"><circle cx="9" cy="6.5" r="3.2" fill="#fff" stroke="#333" stroke-width="1.1"/><path d="M1 6.5 H5 M13 6.5 H17 M1.5 3.5 V9.5 M16.5 3.5 V9.5 M11 9 L13.5 11.5" stroke="#333" stroke-width="1.1"/></svg><svg class="a" style="left:131px;top:336px" width="13" height="18" viewBox="0 0 13 18"><path d="M3 1 H10 M6.5 1 V5 M3 17 H10 M6.5 13 V17" stroke="#333"/><circle cx="6" cy="9" r="3.2" fill="#fff" stroke="#333" stroke-width="1.1"/><path d="M8.5 11.5 L11 14" stroke="#333" stroke-width="1.2"/></svg><div class="a" style="left:151px;top:335px;width:1px;height:21px;background:#bcbcbc"></div><svg class="a" style="left:159px;top:338px" width="16" height="16" viewBox="0 0 16 16"><rect x="0.5" y="0.5" width="15" height="15" fill="#fff" stroke="#333"/><path d="M3 3 L6 6 M3 3 V5.5 M3 3 H5.5 M13 3 L10 6 M13 3 V5.5 M13 3 H10.5 M3 13 L6 10 M3 13 V10.5 M3 13 H5.5 M13 13 L10 10 M13 13 V10.5 M13 13 H10.5" stroke="#333" stroke-width="0.9"/></svg><svg class="a" style="left:182px;top:337px" width="17" height="17" viewBox="0 0 17 17"><path d="M0.5 0.5 H16.5 V16.5" stroke="#555" stroke-dasharray="1 1" fill="none"/><path d="M1 1 L9 9 M9 9 V4 M9 9 H4" stroke="#d0202a" stroke-width="2.6"/><rect x="8.5" y="10.5" width="7" height="6" fill="#555"/><rect x="10" y="13" width="2" height="3" fill="#fff"/></svg><svg class="a" style="left:205px;top:337px" width="17" height="17" viewBox="0 0 17 17"><path d="M0.5 0.5 H16.5 V16.5" stroke="#555" stroke-dasharray="1 1" fill="none"/><path d="M10 10 L2 2 M2 2 V7 M2 2 H7" stroke="#3aa03a" stroke-width="2.6"/><rect x="8.5" y="10.5" width="7" height="6" fill="#555"/><rect x="10" y="13" width="2" height="3" fill="#fff"/></svg><div class="a" style="left:228px;top:335px;width:1px;height:21px;background:#bcbcbc"></div><svg class="a" style="left:236px;top:337px" width="15" height="17" viewBox="0 0 15 17"><rect x="0.5" y="0.5" width="14" height="13" fill="#e8e8e8" stroke="#111"/><rect x="2" y="2" width="11" height="8" fill="#fff" stroke="#1e7fd0" stroke-width="1.2"/><path d="M4 14 V16 M6 14 V16 M8 14 V16 M10 14 V16" stroke="#222"/></svg><svg class="a" style="left:260px;top:337px" width="13" height="17" viewBox="0 0 13 17"><path d="M3.5 8 V4.5 A3 3 0 0 1 9.5 4.5 V8" fill="none" stroke="#9a9a9a" stroke-width="1.5"/><rect x="1.5" y="8" width="10" height="8" fill="#a8a8a8"/><path d="M6.5 10.5 V14" stroke="#888"/></svg><svg class="a" style="left:282px;top:337px" width="17" height="18" viewBox="0 0 17 18"><path d="M0 5 H8 M6 1.5 H14 M6 4.5 H14 M7 1 V10" stroke="#9a9a9a" stroke-width="1.4"/><path d="M8 6 L8 16 L10.3 13.8 L12.3 17 L13.8 16.2 L11.8 13 L14.8 12.5 Z" fill="#a8a8a8" stroke="#8a8a8a" stroke-width="0.6"/></svg><svg class="a" style="left:337px;top:341px" width="9" height="9" viewBox="0 0 9 9"><path d="M1 1 L7 7 M7 3 V7 H3" stroke="#111" stroke-width="1.6" fill="none"/></svg><svg class="a" style="left:0;top:0" width="366" height="728" font-family="Liberation Sans, sans-serif"><rect x="61" y="391" width="264" height="161" fill="#000"/><path d="M104.5 393 V551" stroke="#fff" stroke-width="1" stroke-dasharray="1 4"/><path d="M104.5 551 v-3 M104.5 391 v3" stroke="#fff" stroke-width="1"/><path d="M148.5 393 V551" stroke="#fff" stroke-width="1" stroke-dasharray="1 4"/><path d="M148.5 551 v-3 M148.5 391 v3" stroke="#fff" stroke-width="1"/><path d="M192.5 393 V551" stroke="#fff" stroke-width="1" stroke-dasharray="1 4"/><path d="M192.5 551 v-3 M192.5 391 v3" stroke="#fff" stroke-width="1"/><path d="M236.5 393 V551" stroke="#fff" stroke-width="1" stroke-dasharray="1 4"/><path d="M236.5 551 v-3 M236.5 391 v3" stroke="#fff" stroke-width="1"/><path d="M280.5 393 V551" stroke="#fff" stroke-width="1" stroke-dasharray="1 4"/><path d="M280.5 551 v-3 M280.5 391 v3" stroke="#fff" stroke-width="1"/><path d="M63 519.5 H324" stroke="#fff" stroke-width="1" stroke-dasharray="1 4"/><path d="M61 519.5 h3 M324 519.5 h-3" stroke="#fff" stroke-width="1"/><path d="M63 487.5 H324" stroke="#fff" stroke-width="1" stroke-dasharray="1 4"/><path d="M61 487.5 h3 M324 487.5 h-3" stroke="#fff" stroke-width="1"/><path d="M63 455.5 H324" stroke="#fff" stroke-width="1" stroke-dasharray="1 4"/><path d="M61 455.5 h3 M324 455.5 h-3" stroke="#fff" stroke-width="1"/><path d="M63 423.5 H324" stroke="#fff" stroke-width="1" stroke-dasharray="1 4"/><path d="M61 423.5 h3 M324 423.5 h-3" stroke="#fff" stroke-width="1"/><rect x="61.5" y="391.5" width="263" height="160" fill="none" stroke="#fff" stroke-width="1"/><path d="M193.0 551.5 L214.9 391.5 L214.9 551.5 L236.8 391.5 L236.8 551.5 L258.8 391.5 L258.8 551.5 L280.7 391.5 L280.7 551.5 L302.6 391.5 L302.6 551.5" stroke="#ffff00" stroke-width="1" fill="none"/><text x="61.5" y="565" fill="#fff" font-size="11.5" text-anchor="middle">0</text><text x="104.5" y="565" fill="#fff" font-size="11.5" text-anchor="middle">1</text><text x="148.5" y="565" fill="#fff" font-size="11.5" text-anchor="middle">2</text><text x="192.5" y="565" fill="#fff" font-size="11.5" text-anchor="middle">3</text><text x="236.5" y="565" fill="#fff" font-size="11.5" text-anchor="middle">4</text><text x="280.5" y="565" fill="#fff" font-size="11.5" text-anchor="middle">5</text><text x="324.5" y="565" fill="#fff" font-size="11.5" text-anchor="middle">6</text><text x="57" y="554.3" fill="#fff" font-size="11.5" text-anchor="end" letter-spacing="-0.3">0</text><text x="57" y="522.3" fill="#fff" font-size="11.5" text-anchor="end" letter-spacing="-0.3">200</text><text x="57" y="490.3" fill="#fff" font-size="11.5" text-anchor="end" letter-spacing="-0.3">400</text><text x="57" y="458.3" fill="#fff" font-size="11.5" text-anchor="end" letter-spacing="-0.3">600</text><text x="57" y="426.3" fill="#fff" font-size="11.5" text-anchor="end" letter-spacing="-0.3">800</text><text x="57" y="394.3" fill="#fff" font-size="11.5" text-anchor="end" letter-spacing="-0.3">1000</text></svg><div class="t" style="left:26px;top:583px;font-size:11.5px;letter-spacing:-0.2px;color:#eee">Time offset:</div><div class="t" style="left:93px;top:583px;font-size:11.5px;color:#eee">0</div>
<!-- ============ TASKBAR ============ -->
<div id="task" class="a" style="left:0;top:728px;width:1366px;height:40px;background:linear-gradient(90deg,#8aa1b8 0%,#90a7be 4.5%,#a9c2dc 7%,#b6cee8 12%,#aec7e2 25%,#b9d0e9 38%,#abc5e1 52%,#b8cfe8 66%,#b2c9e2 74%,#a2b9d1 79%,#8ea4bb 82%,#8aa0b7 100%);border-top:1px solid #1d2935"></div>
<div class="a" style="left:0;top:729px;width:1366px;height:1px;background:rgba(255,255,255,0.35)"></div>
<!-- start orb -->
<svg class="a" style="left:8px;top:729px" width="40" height="39" viewBox="8 729 40 39">
 <defs><radialGradient id="orb" cx="50%" cy="85%" r="75%"><stop offset="0" stop-color="#20d0f8"/><stop offset="0.35" stop-color="#1a7ac0"/><stop offset="0.8" stop-color="#0c4a88"/><stop offset="1" stop-color="#0a3060"/></radialGradient>
 <linearGradient id="ogl" x1="0" y1="0" x2="0" y2="1"><stop offset="0" stop-color="rgba(255,255,255,0.75)"/><stop offset="1" stop-color="rgba(255,255,255,0.05)"/></linearGradient></defs>
 <circle cx="27" cy="748" r="17.3" fill="url(#orb)" stroke="#d8e4f0" stroke-width="0.8"/>
 <circle cx="27" cy="748" r="16.6" fill="none" stroke="#12406e" stroke-width="0.9"/>
 <path d="M19 738.5 Q24 736 28.5 738.5 L27 747 Q22.5 744.5 17.5 747Z" fill="#f06a20"/>
 <path d="M29.8 739 Q34.5 741.5 39 739 L37.2 748 Q32.5 750.5 28.3 747.5Z" fill="#8ccc30"/>
 <path d="M17.2 748.5 Q22 746 26.8 748.5 L25.3 757 Q20.5 754.5 15.6 757Z" fill="#2aa0e8"/>
 <path d="M28 749 Q32.5 751.5 37 749 L35.3 758 Q30.5 760.5 26.5 757.5Z" fill="#fcc020"/>
 <ellipse cx="27" cy="740" rx="14" ry="8.5" fill="url(#ogl)"/>
</svg>
<svg class="a" style="left:58px;top:733px" width="10" height="32"><rect x="0" y="0" width="2" height="2" fill="#2a3644"/><rect x="1" y="1" width="1" height="1" fill="#d8e2ec" opacity="0.6"/><rect x="3" y="0" width="2" height="2" fill="#2a3644"/><rect x="4" y="1" width="1" height="1" fill="#d8e2ec" opacity="0.6"/><rect x="6" y="0" width="2" height="2" fill="#2a3644"/><rect x="7" y="1" width="1" height="1" fill="#d8e2ec" opacity="0.6"/><rect x="0" y="4" width="2" height="2" fill="#2a3644"/><rect x="1" y="5" width="1" height="1" fill="#d8e2ec" opacity="0.6"/><rect x="3" y="4" width="2" height="2" fill="#2a3644"/><rect x="4" y="5" width="1" height="1" fill="#d8e2ec" opacity="0.6"/><rect x="6" y="4" width="2" height="2" fill="#2a3644"/><rect x="7" y="5" width="1" height="1" fill="#d8e2ec" opacity="0.6"/><rect x="0" y="8" width="2" height="2" fill="#2a3644"/><rect x="1" y="9" width="1" height="1" fill="#d8e2ec" opacity="0.6"/><rect x="3" y="8" width="2" height="2" fill="#2a3644"/><rect x="4" y="9" width="1" height="1" fill="#d8e2ec" opacity="0.6"/><rect x="6" y="8" width="2" height="2" fill="#2a3644"/><rect x="7" y="9" width="1" height="1" fill="#d8e2ec" opacity="0.6"/><rect x="0" y="12" width="2" height="2" fill="#2a3644"/><rect x="1" y="13" width="1" height="1" fill="#d8e2ec" opacity="0.6"/><rect x="3" y="12" width="2" height="2" fill="#2a3644"/><rect x="4" y="13" width="1" height="1" fill="#d8e2ec" opacity="0.6"/><rect x="6" y="12" width="2" height="2" fill="#2a3644"/><rect x="7" y="13" width="1" height="1" fill="#d8e2ec" opacity="0.6"/><rect x="0" y="16" width="2" height="2" fill="#2a3644"/><rect x="1" y="17" width="1" height="1" fill="#d8e2ec" opacity="0.6"/><rect x="3" y="16" width="2" height="2" fill="#2a3644"/><rect x="4" y="17" width="1" height="1" fill="#d8e2ec" opacity="0.6"/><rect x="6" y="16" width="2" height="2" fill="#2a3644"/><rect x="7" y="17" width="1" height="1" fill="#d8e2ec" opacity="0.6"/><rect x="0" y="20" width="2" height="2" fill="#2a3644"/><rect x="1" y="21" width="1" height="1" fill="#d8e2ec" opacity="0.6"/><rect x="3" y="20" width="2" height="2" fill="#2a3644"/><rect x="4" y="21" width="1" height="1" fill="#d8e2ec" opacity="0.6"/><rect x="6" y="20" width="2" height="2" fill="#2a3644"/><rect x="7" y="21" width="1" height="1" fill="#d8e2ec" opacity="0.6"/><rect x="0" y="24" width="2" height="2" fill="#2a3644"/><rect x="1" y="25" width="1" height="1" fill="#d8e2ec" opacity="0.6"/><rect x="3" y="24" width="2" height="2" fill="#2a3644"/><rect x="4" y="25" width="1" height="1" fill="#d8e2ec" opacity="0.6"/><rect x="6" y="24" width="2" height="2" fill="#2a3644"/><rect x="7" y="25" width="1" height="1" fill="#d8e2ec" opacity="0.6"/><rect x="0" y="28" width="2" height="2" fill="#2a3644"/><rect x="1" y="29" width="1" height="1" fill="#d8e2ec" opacity="0.6"/><rect x="3" y="28" width="2" height="2" fill="#2a3644"/><rect x="4" y="29" width="1" height="1" fill="#d8e2ec" opacity="0.6"/><rect x="6" y="28" width="2" height="2" fill="#2a3644"/><rect x="7" y="29" width="1" height="1" fill="#d8e2ec" opacity="0.6"/></svg>
<!-- explorer -->
<svg class="a" style="left:86px;top:732px" width="38" height="34" viewBox="86 732 38 34">
 <defs><linearGradient id="fdb" x1="0" y1="0" x2="0" y2="1"><stop offset="0" stop-color="#f8e8b0"/><stop offset="1" stop-color="#e8c870"/></linearGradient>
 <linearGradient id="fdf" x1="0" y1="0" x2="0" y2="1"><stop offset="0" stop-color="#fdf3c8"/><stop offset="1" stop-color="#f0d890"/></linearGradient>
 <linearGradient id="fst" x1="0" y1="0" x2="0" y2="1"><stop offset="0" stop-color="#c8ecfc"/><stop offset="1" stop-color="#58b8ec"/></linearGradient></defs>
 <path d="M89.5 736 Q89.5 735 91 735 H98 L99.5 737 H120 Q121 737 121 738.5 V761.5 H89.5Z" fill="url(#fdb)" stroke="#c0a050" stroke-width="0.8"/>
 <rect x="93" y="736" width="10" height="3" fill="#fff"/><rect x="94" y="736" width="3" height="2.2" fill="#20b020"/>
 <rect x="100" y="738" width="10" height="3" fill="#fff"/><rect x="101" y="738" width="3" height="2.2" fill="#e03020"/>
 <rect x="108" y="740" width="10" height="3" fill="#fff"/><rect x="109" y="740" width="3" height="2.2" fill="#2090e0"/>
 <path d="M89.5 743 H106 L108 741.5 H121 V761.5 H89.5Z" fill="url(#fdf)" stroke="#c8a858" stroke-width="0.8"/>
 <path d="M93 764 V752.5 Q93 751 94.5 751 H115.5 Q117 751 117 752.5 V764 H111.5 V756.5 H98.5 V764Z" fill="url(#fst)" stroke="#3a98d8" stroke-width="0.9"/>
 <path d="M95 755 L100 750 M95.5 749 V756" stroke="#fff" stroke-width="0.7" opacity="0.8"/>
</svg>
<!-- openoffice -->
<svg class="a" style="left:151px;top:731px" width="32" height="32" viewBox="0 0 32 32">
 <defs><radialGradient id="oo" cx="50%" cy="65%" r="60%"><stop offset="0" stop-color="#5aa8e0"/><stop offset="0.7" stop-color="#2a74c8"/><stop offset="1" stop-color="#1a58a8"/></radialGradient></defs>
 <circle cx="16" cy="16" r="14.5" fill="url(#oo)" stroke="#2a5a98" stroke-width="0.6"/>
 <ellipse cx="16" cy="9" rx="10" ry="6" fill="rgba(255,255,255,0.25)"/>
 <path d="M9.5 8 Q14 8 18 11.5 Q21 7.5 26.5 8 Q22 10.5 18.5 14.5 Q14 10.5 9.5 8Z" fill="#fff"/>
 <path d="M1.8 17 Q8 16 12 21.5 Q18 16.5 26.5 16.5 Q19 19.5 12.5 26 Q8 21 1.8 20Z" fill="#fff"/>
</svg>
<!-- excel -->
<svg class="a" style="left:212px;top:731px" width="34" height="34" viewBox="0 0 34 34">
 <defs><linearGradient id="xlg" x1="0" y1="0" x2="0.3" y2="1"><stop offset="0" stop-color="#e8f5e0"/><stop offset="0.5" stop-color="#8fcf78"/><stop offset="1" stop-color="#3f9a3a"/></linearGradient></defs>
 <path d="M3 2.5 H28.5 V30.5 H1.5 V4Z" fill="url(#xlg)" stroke="#2a7a2a" stroke-width="1.2"/>
 <path d="M5 6 H11 L14.5 12.5 L18 6 H24 L17.5 16 L24 26 H18 L14.5 19.5 L11 26 H5 L11.5 16Z" fill="#2f8a30"/>
 <path d="M15 17 L33 22 L30 31 L13 27Z" fill="#fff" stroke="#9acb90" stroke-width="0.6"/>
 <path d="M16 20.5 L31 24.5 M15.2 23.5 L30 27.5" stroke="#7ab870" stroke-width="0.9"/>
</svg>
<!-- firefox -->
<svg class="a" style="left:275px;top:731px" width="34" height="34" viewBox="0 0 34 34">
 <defs><radialGradient id="ffg" cx="60%" cy="40%" r="55%"><stop offset="0" stop-color="#7cc8f0"/><stop offset="0.6" stop-color="#2d6cb5"/><stop offset="1" stop-color="#18407a"/></radialGradient><linearGradient id="ffo" x1="0" y1="0" x2="0.6" y2="1"><stop offset="0" stop-color="#e85a10"/><stop offset="0.6" stop-color="#f08a20"/><stop offset="1" stop-color="#f5c040"/></linearGradient></defs>
 <circle cx="17.5" cy="16" r="13" fill="url(#ffg)"/>
 <path d="M5 7 Q6.5 4 8 5 Q8 8 10 9 Q9 13 11 17 Q14 22 20 21.5 Q27 21 29.5 13 Q32 24 24 29.5 Q16 33 9 28.5 Q2 23 4 13 Q4.5 9 5 7Z" fill="url(#ffo)"/>
 <path d="M11 9 Q14 6 18 8 Q15 9 13 12Z" fill="#e8701a"/>
 <path d="M29.5 13 Q31 18 28 24 Q30 17 26 12Z" fill="#f5b030"/>
</svg>
<!-- word -->
<svg class="a" style="left:335px;top:731px" width="34" height="34" viewBox="0 0 34 34">
 <defs><linearGradient id="wdg" x1="0" y1="0" x2="0" y2="1"><stop offset="0" stop-color="#dfeaf8"/><stop offset="0.6" stop-color="#ffffff"/><stop offset="1" stop-color="#c8d8f0"/></linearGradient></defs>
 <path d="M3 2.5 H28.5 V30.5 H1.5 V4Z" fill="url(#wdg)" stroke="#2a5fb0" stroke-width="1.2"/>
 <path d="M4 7 H9 L11 19 L14 7 H18 L21 19 L23 7 H28 L23 25 H18.5 L16 14 L13.5 25 H9Z" fill="#2458c0"/>
 <path d="M17 20 L33 24 L30.5 31 L14.5 27Z" fill="#fff" stroke="#8aa8d8" stroke-width="0.6"/>
 <path d="M17 23 L30.5 26.5 M16.3 25.5 L29.5 29" stroke="#8aa8d8" stroke-width="0.8"/>
</svg>
<!-- matlab active button -->
<div class="a" style="left:386px;top:729px;width:51px;height:39px;border:1px solid #6a7f95;border-bottom:none;border-radius:3px 3px 0 0;background:linear-gradient(#f4f8fc,#dde8f4 50%,#cfdeee)"></div>
<div class="a" style="left:439px;top:729px;width:4px;height:39px;border:1px solid #7a8fa5;border-bottom:none;border-radius:2px 2px 0 0;background:#d8e4f0"></div>
<svg class="a" style="left:386px;top:729px" width="50" height="39" viewBox="0 0 50 39">
 <defs><linearGradient id="tbm" x1="0" y1="0" x2="1" y2="0"><stop offset="0" stop-color="#8a1a10"/><stop offset="0.45" stop-color="#f08a20"/><stop offset="0.55" stop-color="#f5c030"/><stop offset="0.8" stop-color="#d8501a"/><stop offset="1" stop-color="#b02a10"/></linearGradient></defs>
 <path d="M9.2 20.4 L19 15 L30 4.5 L25 14 L20 23 L15.5 26.5 Z" fill="#3b93d6"/>
 <path d="M19 15 L25 12 L21.5 19.5Z" fill="#6a1a20"/>
 <path d="M30.25 4.5 Q33 10 40.7 27.6 L35 23 Q29 25 23 33 Q21 29 19.5 24 Q25 18 30.25 4.5 Z" fill="url(#tbm)"/>
 <path d="M23 33 Q21 29 19.5 24 L24 27Z" fill="#f5c030"/>
</svg>
<!-- visio -->
<svg class="a" style="left:460px;top:731px" width="33" height="33" viewBox="0 0 33 33">
 <defs><linearGradient id="vsg" x1="0" y1="0" x2="1" y2="1"><stop offset="0" stop-color="#e8f0fb"/><stop offset="0.5" stop-color="#fff"/><stop offset="0.8" stop-color="#7aa0e0"/></linearGradient></defs>
 <path d="M4 1.5 H28.5 V30.5 H1.5 V4Z" fill="url(#vsg)" stroke="#2a4fb8" stroke-width="1.1"/>
 <path d="M6 3.5 H11 L15 17 L19 3.5 H24 L17.5 22 H12.5Z" fill="#2a4fc0"/>
 <path d="M16 17 L31 21 L29 31 L14 27Z" fill="#fff" stroke="#9ab0e0" stroke-width="0.6"/>
 <path d="M24 19.5 L26 21.5 L24 23.5 L22 21.5Z M17 24 h1.5 M19.5 24.8 h1.5 M22 25.5 h1.5" stroke="#6a80d0" fill="#6a80d0" stroke-width="0.9"/>
</svg>
<!-- skype button -->
<div class="a" style="left:510px;top:729px;width:58px;height:39px;border:1px solid #7d93aa;border-bottom:none;border-radius:3px 3px 0 0;background:linear-gradient(rgba(255,255,255,0.45),rgba(255,255,255,0.15))"></div>
<svg class="a" style="left:523px;top:732px" width="33" height="33" viewBox="0 0 33 33">
 <circle cx="16" cy="16" r="14" fill="#1aa1e6"/><circle cx="8" cy="8" r="6" fill="#1aa1e6"/><circle cx="24" cy="24" r="6" fill="#1aa1e6"/>
 <path d="M21 10 Q17 7 12.5 9 Q9 11 12 14 Q14 15.5 18 16.5 Q21.5 18 19.5 21 Q16 23 11 20" stroke="#fff" stroke-width="3.4" fill="none" stroke-linecap="round"/>
 <path d="M22 21 Q28 19.5 30.5 25 Q31 31 25 32 Q19.5 31.5 19.5 26 Q19.5 22 22 21Z" fill="#fff" stroke="#8cc020" stroke-width="1.5"/>
</svg>
<!-- tray -->
<svg class="a" style="left:1111px;top:735px" width="10" height="32"><rect x="0" y="0" width="2" height="2" fill="#2a3644"/><rect x="1" y="1" width="1" height="1" fill="#d8e2ec" opacity="0.6"/><rect x="3" y="0" width="2" height="2" fill="#2a3644"/><rect x="4" y="1" width="1" height="1" fill="#d8e2ec" opacity="0.6"/><rect x="6" y="0" width="2" height="2" fill="#2a3644"/><rect x="7" y="1" width="1" height="1" fill="#d8e2ec" opacity="0.6"/><rect x="0" y="4" width="2" height="2" fill="#2a3644"/><rect x="1" y="5" width="1" height="1" fill="#d8e2ec" opacity="0.6"/><rect x="3" y="4" width="2" height="2" fill="#2a3644"/><rect x="4" y="5" width="1" height="1" fill="#d8e2ec" opacity="0.6"/><rect x="6" y="4" width="2" height="2" fill="#2a3644"/><rect x="7" y="5" width="1" height="1" fill="#d8e2ec" opacity="0.6"/><rect x="0" y="8" width="2" height="2" fill="#2a3644"/><rect x="1" y="9" width="1" height="1" fill="#d8e2ec" opacity="0.6"/><rect x="3" y="8" width="2" height="2" fill="#2a3644"/><rect x="4" y="9" width="1" height="1" fill="#d8e2ec" opacity="0.6"/><rect x="6" y="8" width="2" height="2" fill="#2a3644"/><rect x="7" y="9" width="1" height="1" fill="#d8e2ec" opacity="0.6"/><rect x="0" y="12" width="2" height="2" fill="#2a3644"/><rect x="1" y="13" width="1" height="1" fill="#d8e2ec" opacity="0.6"/><rect x="3" y="12" width="2" height="2" fill="#2a3644"/><rect x="4" y="13" width="1" height="1" fill="#d8e2ec" opacity="0.6"/><rect x="6" y="12" width="2" height="2" fill="#2a3644"/><rect x="7" y="13" width="1" height="1" fill="#d8e2ec" opacity="0.6"/><rect x="0" y="16" width="2" height="2" fill="#2a3644"/><rect x="1" y="17" width="1" height="1" fill="#d8e2ec" opacity="0.6"/><rect x="3" y="16" width="2" height="2" fill="#2a3644"/><rect x="4" y="17" width="1" height="1" fill="#d8e2ec" opacity="0.6"/><rect x="6" y="16" width="2" height="2" fill="#2a3644"/><rect x="7" y="17" width="1" height="1" fill="#d8e2ec" opacity="0.6"/><rect x="0" y="20" width="2" height="2" fill="#2a3644"/><rect x="1" y="21" width="1" height="1" fill="#d8e2ec" opacity="0.6"/><rect x="3" y="20" width="2" height="2" fill="#2a3644"/><rect x="4" y="21" width="1" height="1" fill="#d8e2ec" opacity="0.6"/><rect x="6" y="20" width="2" height="2" fill="#2a3644"/><rect x="7" y="21" width="1" height="1" fill="#d8e2ec" opacity="0.6"/><rect x="0" y="24" width="2" height="2" fill="#2a3644"/><rect x="1" y="25" width="1" height="1" fill="#d8e2ec" opacity="0.6"/><rect x="3" y="24" width="2" height="2" fill="#2a3644"/><rect x="4" y="25" width="1" height="1" fill="#d8e2ec" opacity="0.6"/><rect x="6" y="24" width="2" height="2" fill="#2a3644"/><rect x="7" y="25" width="1" height="1" fill="#d8e2ec" opacity="0.6"/><rect x="0" y="28" width="2" height="2" fill="#2a3644"/><rect x="1" y="29" width="1" height="1" fill="#d8e2ec" opacity="0.6"/><rect x="3" y="28" width="2" height="2" fill="#2a3644"/><rect x="4" y="29" width="1" height="1" fill="#d8e2ec" opacity="0.6"/><rect x="6" y="28" width="2" height="2" fill="#2a3644"/><rect x="7" y="29" width="1" height="1" fill="#d8e2ec" opacity="0.6"/></svg>
<div class="t" style="left:1128px;top:740px;font-size:11px;color:#eef3f8">DE</div>
<svg class="a" style="left:1158px;top:746px" width="11" height="7"><path d="M0.5 6 L5.5 0.5 L10.5 6Z" fill="#f4f8fc"/></svg>
<svg class="a" style="left:1179px;top:739px" width="19" height="20" viewBox="0 0 19 20">
 <path d="M2.5 1 V19" stroke="#eee" stroke-width="1.6"/><path d="M3.5 2 Q8 0 10 3 Q13 5 17 3 V11 Q13 13 10 11 Q8 9 3.5 11Z" fill="#f4f4f4" stroke="#555" stroke-width="0.7"/>
 <circle cx="13" cy="14" r="5.2" fill="#e02020" stroke="#fff" stroke-width="0.8"/><path d="M10.8 11.8 L15.2 16.2 M15.2 11.8 L10.8 16.2" stroke="#fff" stroke-width="1.5"/>
</svg>
<svg class="a" style="left:1204px;top:740px" width="16" height="18" viewBox="0 0 16 18">
 <path d="M1 2 Q8 -1 15 2 V9 Q14 15 8 17.5 Q2 15 1 9Z" fill="#d81e1e" stroke="#fff" stroke-width="0.8"/><path d="M10.5 5 H6 V12.5 H10.5 V9.5 H8.5" stroke="#fff" stroke-width="1.8" fill="none"/>
</svg>
<svg class="a" style="left:1229px;top:739px" width="13" height="20" viewBox="0 0 13 20">
 <rect x="4" y="0.5" width="5" height="2" fill="#eee"/><rect x="1" y="2" width="11" height="17" rx="2" fill="none" stroke="#f0f0f0" stroke-width="1.6"/><rect x="3" y="10" width="7" height="7" fill="#f0f0f0"/><rect x="3" y="4" width="7" height="6" fill="#4a5a6a"/>
</svg>
<svg class="a" style="left:1252px;top:738px" width="20" height="20" viewBox="0 0 20 20">
 <path d="M1 7 H4 L9 2.5 V17.5 L4 13 H1Z" fill="#f0f0f0" stroke="#555" stroke-width="0.6"/><path d="M11.5 7 Q13 10 11.5 13 M14 5 Q17 10 14 15 M16.5 3 Q20.5 10 16.5 17" stroke="#f0f0f0" stroke-width="1.3" fill="none"/>
</svg>
<div class="t" style="left:1299px;top:735px;font-size:11px;color:#f4f8fc">12:03</div>
<div class="t" style="left:1285px;top:752px;font-size:11px;color:#f4f8fc">01.03.2013</div>
<div class="a" style="left:1352px;top:729px;width:14px;height:39px;border:1px solid #52667a;border-right:none;border-radius:2px 0 0 0;background:linear-gradient(100deg,#c4d4e4,#98acc0 60%,#8ca2b8);box-shadow:inset 1px 1px 0 rgba(255,255,255,0.6)"></div>
</body></html>
